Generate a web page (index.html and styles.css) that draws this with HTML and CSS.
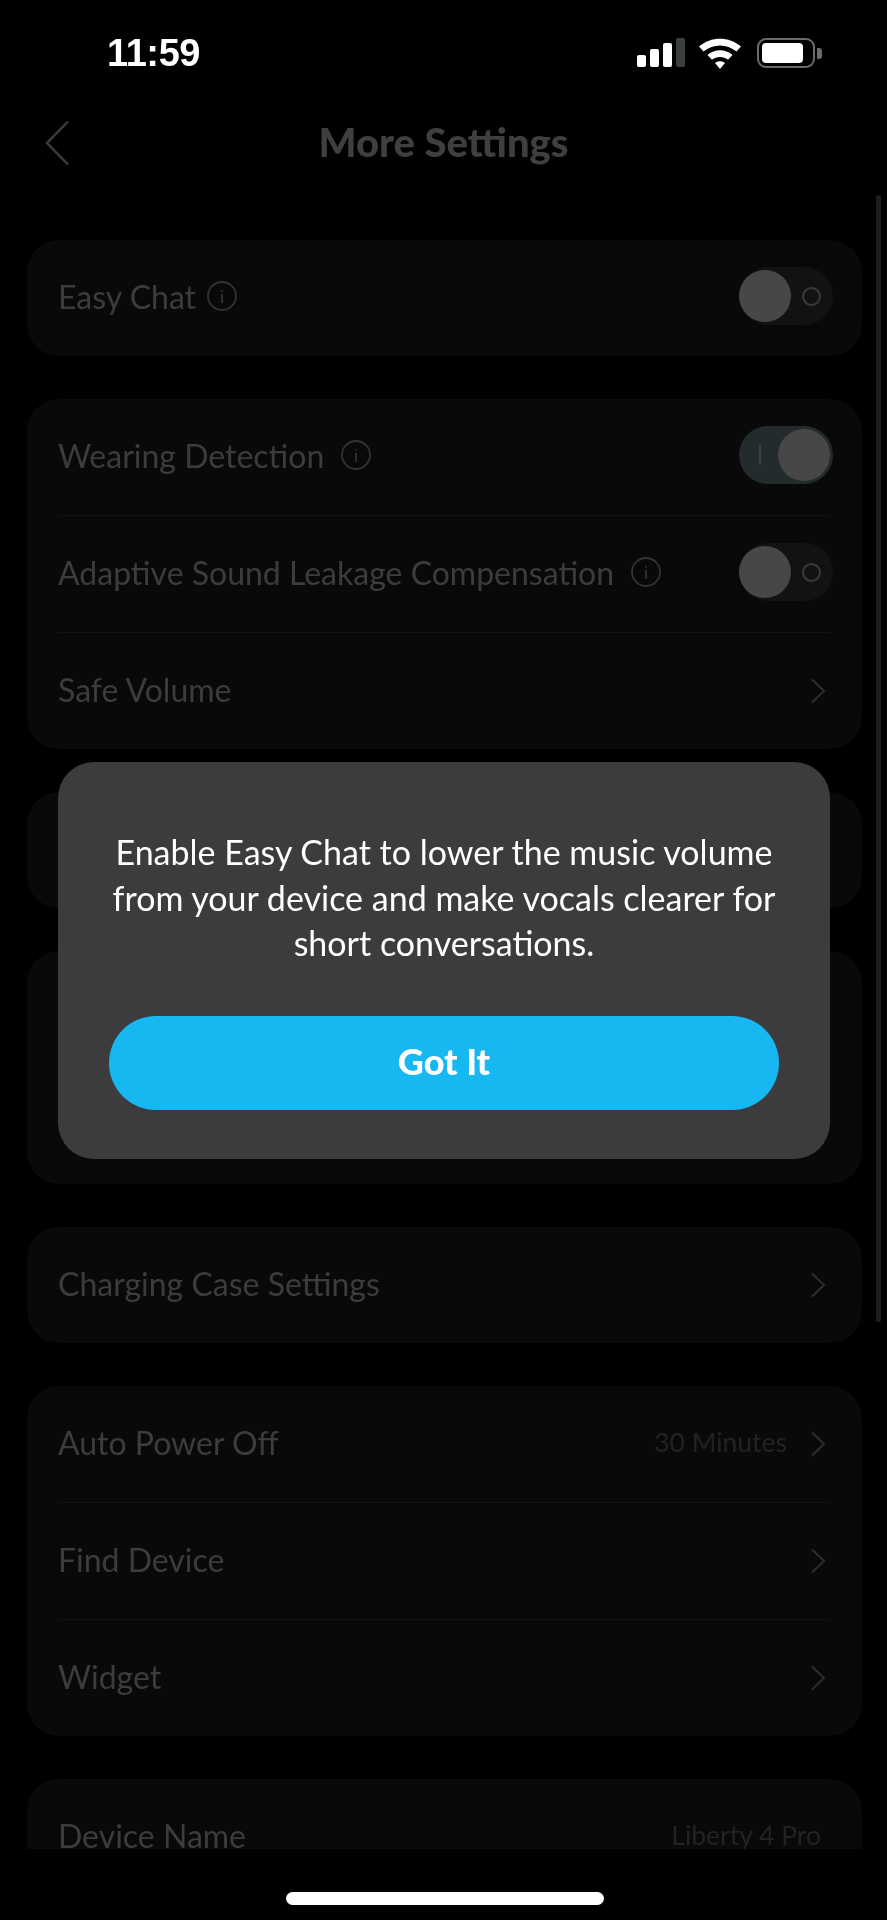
FILE: index.html
```html
<!DOCTYPE html>
<html lang="en">
<head>
<meta charset="utf-8">
<title>More Settings</title>
<link rel="stylesheet" href="styles.css">
</head>
<body>
<div class="screen">
  <div class="status">
    <span class="time">11:59</span>
    <div class="status-icons">
      <div class="signal"><i class="b1"></i><i class="b2"></i><i class="b3"></i><i class="b4"></i></div>
      <svg class="wifi" width="44" height="34" viewBox="0 0 44 34"><path d="M1 11.500C13 1 31 1 43 11.500L38.500 16.500C28.500 8.500 15.500 8.500 5.500 16.500Z" fill="#fff"/><path d="M9.500 20C17 13.800 27 13.800 34.500 20L30 24.800C25.300 21 18.700 21 14 24.800Z" fill="#fff"/><path d="M17 28C19.800 25.800 24.200 25.800 27 28L22 34Z" fill="#fff"/></svg>
      <div class="battery"><div class="battery-body"><div class="battery-fill"></div></div><div class="battery-tip"></div></div>
    </div>
  </div>
  <header class="nav">
    <svg class="back" width="24" height="46" viewBox="0 0 24 46"><path d="M23 1.500L2 23L23 44.500" fill="none" stroke="#3c3c3c" stroke-width="2.500"/></svg>
    <h1 class="title">More Settings</h1>
  </header>
  <main class="list">
    <section class="card">
      <div class="row"><span class="label">Easy Chat</span><svg class="info info-near" viewBox="0 0 30 30"><circle cx="15" cy="15" r="14" /><path d="M15 9v1.500M15 13v9"/></svg><span class="toggle toggle-off"><i class="ring"></i><i class="knob"></i></span></div>
    </section>
    <section class="card">
      <div class="row"><span class="label">Wearing Detection</span><svg class="info" viewBox="0 0 30 30"><circle cx="15" cy="15" r="14" /><path d="M15 9v1.500M15 13v9"/></svg><span class="toggle toggle-on"><i class="bar"></i><i class="knob"></i></span></div>
      <div class="row"><span class="label">Adaptive Sound Leakage Compensation</span><svg class="info" viewBox="0 0 30 30"><circle cx="15" cy="15" r="14" /><path d="M15 9v1.500M15 13v9"/></svg><span class="toggle toggle-off"><i class="ring"></i><i class="knob"></i></span></div>
      <div class="row"><span class="label">Safe Volume</span><svg class="chev" viewBox="0 0 16 26"><path d="M2 1.500L14 13L2 24.500"/></svg></div>
    </section>
    <section class="card"><div class="row"></div></section>
    <section class="card card-double"><div class="row"></div><div class="row"></div></section>
    <section class="card">
      <div class="row"><span class="label">Charging Case Settings</span><svg class="chev" viewBox="0 0 16 26"><path d="M2 1.500L14 13L2 24.500"/></svg></div>
    </section>
    <section class="card">
      <div class="row"><span class="label">Auto Power Off</span><span class="value">30 Minutes</span><svg class="chev chev-after" viewBox="0 0 16 26"><path d="M2 1.500L14 13L2 24.500"/></svg></div>
      <div class="row"><span class="label">Find Device</span><svg class="chev" viewBox="0 0 16 26"><path d="M2 1.500L14 13L2 24.500"/></svg></div>
      <div class="row"><span class="label">Widget</span><svg class="chev" viewBox="0 0 16 26"><path d="M2 1.500L14 13L2 24.500"/></svg></div>
    </section>
    <section class="card">
      <div class="row"><span class="label">Device Name</span><span class="value value-end">Liberty 4 Pro</span></div>
    </section>
  </main>
  <div class="scrollbar"></div>
  <div class="dialog">
    <p class="dialog-text">Enable Easy Chat to lower the music volume from your device and make vocals clearer for short conversations.</p>
    <button class="dialog-btn">Got It</button>
  </div>
  <div class="home"></div>
</div>
</body>
</html>
```
FILE: styles.css
```css
* { box-sizing: border-box; }
html, body { margin: 0; padding: 0; background: #000; }
body { font-family: Lato, "Open Sans", sans-serif; }
.screen { position: relative; width: 887px; height: 1920px; overflow: hidden; background: #000; filter: blur(0.5px); }

.status { height: 90px; display: flex; justify-content: space-between; align-items: flex-start; padding: 35px 65px 0 107px; }
.time { font-family: "Liberation Sans", sans-serif; font-weight: 700; font-size: 38px; line-height: 36px; color: #fff; letter-spacing: -0.400px; }
.status-icons { display: flex; align-items: flex-start; margin-left: auto; }
.signal { display: flex; align-items: flex-end; gap: 4px; height: 29px; margin-top: 3px; margin-right: 13px; }
.signal i { display: block; width: 9px; background: #fff; border-radius: 2px; }
.b1 { height: 12px; }
.b2 { height: 18px; }
.b3 { height: 24px; }
.signal .b4 { height: 29px; background: #3a3f3f; }
.wifi { margin-right: 15px; }
.battery { display: flex; align-items: center; margin-top: 3px; }
.battery-body { width: 58px; height: 30px; border: 2.500px solid #6a6a6a; border-radius: 9px; padding: 3px; }
.battery-fill { width: 41px; height: 100%; background: #fff; border-radius: 4px; }
.battery-tip { width: 5px; height: 11px; margin-left: 2px; background: #6a6a6a; border-radius: 0 3px 3px 0; }

.nav { position: relative; height: 107px; display: flex; align-items: center; justify-content: center; padding-bottom: 4px; }
.back { position: absolute; left: 45px; top: 30px; }
.title { margin: 0; font-size: 40px; font-weight: 900; color: #3f3f3f; line-height: 44px; }

.list { height: 1609px; overflow: hidden; margin-top: 43px; padding: 0 25px 0 27px; display: flex; flex-direction: column; gap: 43px; }
.card { flex: none; background: #090909; border-radius: 32px; padding: 0 32px 0 31px; }
.row { height: 116px; display: flex; align-items: center; padding-bottom: 4px; }
.row + .row { height: 117px; border-top: 1px solid #131313; }
.label { font-size: 32px; color: #3c3c3c; white-space: nowrap; }
.value { margin-left: auto; font-size: 26.500px; color: #232323; white-space: nowrap; }
.value-end { margin-right: 9px; }
.info { width: 30px; height: 30px; margin-left: 17px; flex: none; fill: none; stroke: #333; stroke-width: 1.800; }
.info-near { margin-left: 11px; }
.chev { width: 16px; height: 26px; margin-left: auto; margin-right: 4px; margin-top: 3px; flex: none; fill: none; stroke: #2e2e2e; stroke-width: 2; }
.chev-after { margin-left: 23px; }

.toggle { position: relative; margin-left: auto; margin-right: -3px; width: 94px; height: 58px; flex: none; border-radius: 29px; }
.toggle-off { background: #121212; }
.toggle-on { background: #242b2d; }
.knob { position: absolute; top: 3px; width: 52px; height: 52px; border-radius: 50%; background: #474747; }
.toggle-off .knob { left: 0; }
.toggle-on .knob { right: 3px; }
.ring { position: absolute; left: 63px; top: 20px; width: 19px; height: 19px; border: 2px solid #3a3a3a; border-radius: 50%; }
.bar { position: absolute; left: 20px; top: 19px; width: 2px; height: 20px; background: #3b4244; }

.scrollbar { position: absolute; left: 876px; top: 195px; width: 5px; height: 1127px; background: #1e1e1e; border-radius: 3px; }

.dialog { position: absolute; left: 58px; top: 762px; width: 772px; height: 397px; background: #3c3c3e; border-radius: 36px; padding: 67px 51px 0; display: flex; flex-direction: column; align-items: stretch; }
.dialog-text { margin: 0 -4px; font-size: 34px; line-height: 45.500px; color: #fff; text-align: center; }
.dialog-btn { margin-top: 50px; height: 94px; border: 0; border-radius: 47px; padding: 0 0 3px; background: #17b8f2; color: #fff; font-family: inherit; font-size: 36px; font-weight: 900; }

.home { position: absolute; left: 286px; top: 1892px; width: 318px; height: 13px; border-radius: 7px; background: #fff; }
```
